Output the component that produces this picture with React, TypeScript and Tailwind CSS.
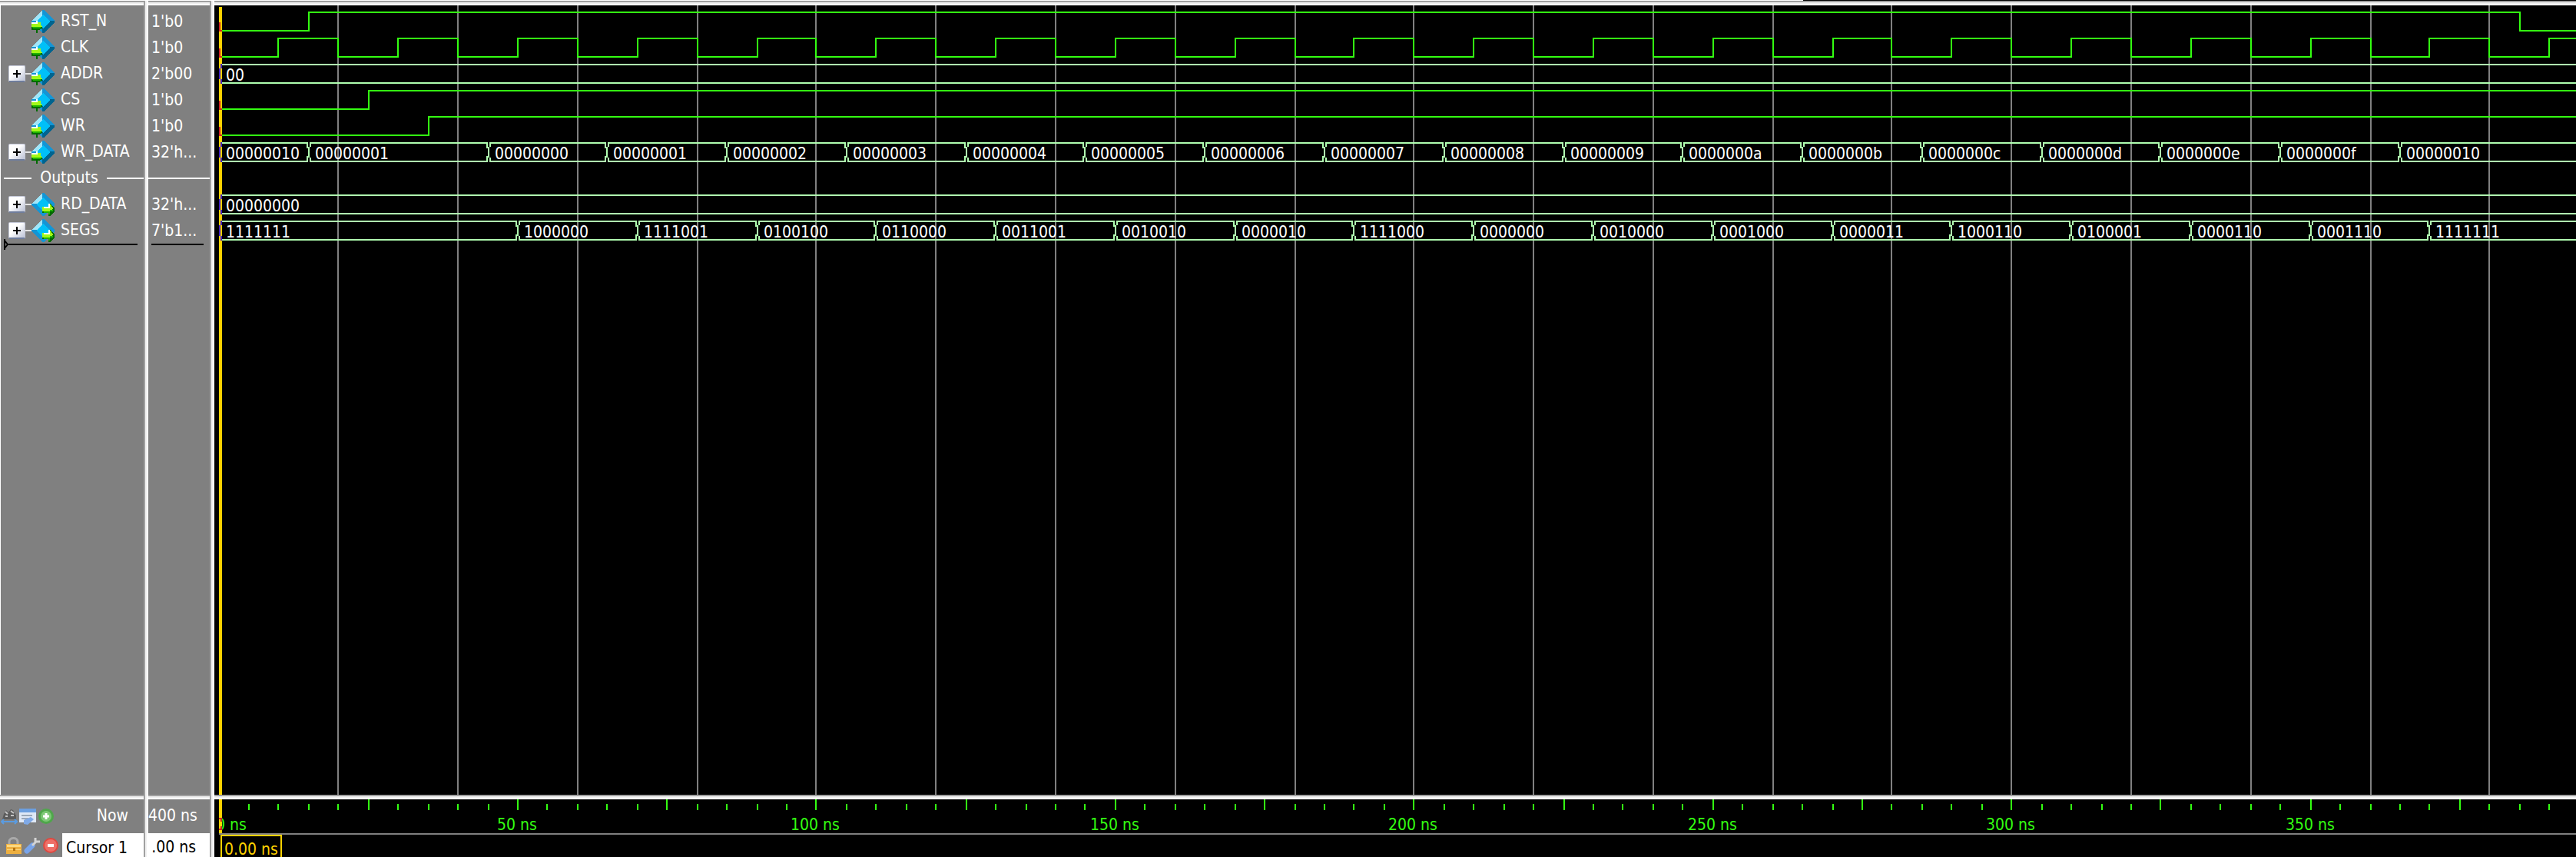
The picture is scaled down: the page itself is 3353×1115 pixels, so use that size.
import React from "react";

type Signal = { name: string; value: string; expandable?: boolean; output?: boolean };

const inputs: Signal[] = [
  { name: "RST_N", value: "1'b0" },
  { name: "CLK", value: "1'b0" },
  { name: "ADDR", value: "2'b00", expandable: true },
  { name: "CS", value: "1'b0" },
  { name: "WR", value: "1'b0" },
  { name: "WR_DATA", value: "32'h...", expandable: true },
];
const outputs: Signal[] = [
  { name: "RD_DATA", value: "32'h...", expandable: true, output: true },
  { name: "SEGS", value: "7'b1...", expandable: true, output: true },
];

const END = 520;
const GREEN = "#33ff11";
const MINT = "#b0ffb0";

// Horizontal position of a time in ns, snapped to the 2px drawing grid.
const px = (t: number) => 4 + 2 * Math.ceil(3.889 * t);

const range = (from: number, to: number, step: number) => {
  const out: number[] = [];
  for (let t = from; t <= to; t += step) out.push(t);
  return out;
};

const wrData: [number, string][] = [
  [0, "00000010"],
  [15, "00000001"],
  ...["0", "1", "2", "3", "4", "5", "6", "7", "8", "9", "a", "b", "c", "d", "e", "f"].map(
    (d, i): [number, string] => [45 + 20 * i, "0000000" + d]
  ),
  [365, "00000010"],
];

const segs: [number, string][] = [
  [0, "1111111"],
  ...[
    "1000000", "1111001", "0100100", "0110000", "0011001", "0010010", "0000010", "1111000", "0000000",
    "0010000", "0001000", "0000011", "1000110", "0100001", "0000110", "0001110", "1111111",
  ].map((v, i): [number, string] => [50 + 20 * i, v]),
];

function BitWave({ row, edges }: { row: number; edges: number[] }) {
  const hi = 9 + 34 * row;
  const lo = hi + 24;
  let level = lo;
  let d = `M10 ${lo}`;
  edges.forEach((t) => {
    level = level === lo ? hi : lo;
    d += `H${px(t) + 1}V${level}`;
  });
  d += `H${px(END)}`;
  return (
    <g fill="none" strokeWidth="2">
      <path d={d} stroke={GREEN} />
      <path d={`M7 ${hi + 13}V${lo}H10`} stroke="#cc2222" />
    </g>
  );
}

function BusWave({ row, items }: { row: number; items: [number, string][] }) {
  const hi = 9 + 34 * row;
  const lo = hi + 24;
  return (
    <g>
      <g fill="none" strokeWidth="2" stroke={MINT}>
        {items.map(([t], i) => {
          const next = items[i + 1];
          const left = t === 0 ? 10 : px(t) + 2;
          const right = next ? px(next[0]) : px(END);
          const x = px(t) + 1;
          return (
            <g key={t}>
              <path d={`M${left} ${hi}H${right}M${left} ${lo}H${right}`} />
              {t > 0 && (
                <path
                  d={`M${x + 2} ${hi}v5M${x + 2} ${lo}v-5M${x} ${hi + 5}V${lo - 5}M${x - 2} ${hi}v7M${x - 2} ${lo}v-7`}
                />
              )}
            </g>
          );
        })}
      </g>
      <path d={`M9 ${hi - 1}v6M7 ${hi + 5}v14M9 ${hi + 19}v6`} stroke="#4422bb" strokeWidth="2" fill="none" />
      {items.map(([t, v]) => (
        <text key={t} x={t === 0 ? 15 : px(t) + 9} y={hi + 21} fill="#fff">
          {v}
        </text>
      ))}
    </g>
  );
}

function Gem({ output }: { output?: boolean }) {
  return (
    <svg viewBox="0 0 15 15" className="size-[30px] shrink-0" shapeRendering="crispEdges" aria-hidden="true">
      <path d="M7 0h1l7 7v1l-7 7H7L0 8V7z" fill="#1495d5" />
      <path d="M7 0v4L4 7H0z" fill="#a0e6fa" />
      <path d="M15 7v1l-7 7H7v-3l4-5z" fill={output ? "#1495d5" : "#00648f"} />
      <path d="M7.500 3L12 7.500 7.500 12 3 7.500z" fill="#00c0f8" />
      {output ? (
        <>
          <path d="M7 9h4V7h1l3 3v2l-3 3h-1v-2H7z" fill="#006a00" />
          <path d="M7 9h4V7h1l2 3-2 2v1h-1v-1H7z" fill="#a2f818" />
          <path d="M8 9h3V7h1v3H8z" fill="#fff" />
          <path d="M8 12h4v-1h2v1h-2v2h-1v-1H8z" fill="#1fb400" />
        </>
      ) : (
        <>
          <path d="M0 9h4V8h1l2 3v1l-2 1H4v2H3v-2H0z" fill="#006a00" />
          <path d="M0 9h4V8h2v2l1 1H0z" fill="#a2f818" />
          <path d="M0 11h6v1H1z" fill="#1fb400" />
          <path d="M0 8h3V7h1v2H0z" fill="#fff" />
          <path d="M1 7h2v1H1z" fill="#1495d5" />
        </>
      )}
    </svg>
  );
}

function NameRow({ s }: { s: Signal }) {
  return (
    <li className="flex h-[34px] items-center pl-[10px]">
      <div className="flex w-[30px] items-center">
        {s.expandable && (
          <>
            <button
              aria-label={`Expand ${s.name}`}
              className="flex size-[22px] shrink-0 items-center justify-center rounded-[2px] border border-[#c4c8d8] border-b-2 border-b-[#6f7d9c] bg-linear-to-br from-white from-40% to-[#bcc2d6]"
            >
              <svg viewBox="0 0 10 10" className="size-[10px]" aria-hidden="true">
                <path d="M5 0v10M0 5h10" stroke="#000" strokeWidth="2" />
              </svg>
            </button>
            <span className="h-[2px] flex-1 bg-[#e4e4e4]" />
          </>
        )}
      </div>
      <Gem output={s.output} />
      <span className="pl-[8px]">{s.name}</span>
    </li>
  );
}

const Bevel = () => (
  <div className="h-[6px] shrink-0 border-t-2 border-[#a0a0a0] bg-linear-to-b from-[#f0f0f0] from-50% to-white to-50%" />
);
const Splitter = () => (
  <div className="w-[6px] shrink-0 border-l-2 border-[#a0a0a0] bg-linear-to-r from-[#f0f0f0] from-50% to-white to-50%" />
);

const Ticks = () => (
  <g stroke={GREEN} strokeWidth="2">
    {range(5, END, 5).map((t) => (
      <path key={t} d={`M${px(t) + 1} ${t % 25 === 0 ? 0 : 6}V14`} />
    ))}
  </g>
);

const iconButton = "flex size-[24px] shrink-0 items-center justify-center";

export default function App() {
  return (
    <div className="flex h-screen min-h-[400px] flex-col overflow-hidden bg-black font-['DejaVu_Sans_Condensed','DejaVu_Sans',sans-serif] text-[21px] whitespace-nowrap text-white">
      <div className="h-px w-[70%] shrink-0 bg-white" />
      <main className="flex min-h-0 flex-1">
        <section aria-label="Signals" className="flex w-[187px] shrink-0 flex-col bg-[#808080]">
          <Bevel />
          <ul className="flex-1 overflow-hidden border-l border-white pt-[4px]">
            {inputs.map((s) => (
              <NameRow key={s.name} s={s} />
            ))}
            <li className="flex h-[34px] items-center pl-[4px]">
              <span className="h-[2px] w-[36px] bg-white" />
              <span className="w-[98px] text-center">Outputs</span>
              <span className="h-[2px] flex-1 bg-white" />
            </li>
            {outputs.map((s) => (
              <NameRow key={s.name} s={s} />
            ))}
            <li className="-mt-[6px] flex h-[14px] items-center pr-[8px] pl-[4px]">
              <svg viewBox="0 0 6 14" className="h-[14px] w-[6px]" aria-hidden="true">
                <path d="M1 0v14M1 2l4 5-4 5" fill="none" stroke="#000" strokeWidth="2" />
              </svg>
              <span className="h-[2px] flex-1 bg-black" />
            </li>
          </ul>
          <Bevel />
          <div className="flex h-[44px] shrink-0 items-center pr-[20px]">
            <button aria-label="Find" className={iconButton}>
              <svg viewBox="0 0 22 22" className="size-[22px]">
                <path d="M2 15L4 8l3-5 3 3 3-4 3 1 4 7v5z" fill="#5c5c5c" />
                <path d="M6 5l3 3M13 4l4 3M6 11h3M13 10h4" stroke="#c4c4c4" strokeWidth="2" />
                <path d="M1 18h20M4 15l-3 3 3 3M18 15l3 3-3 3" fill="none" stroke="#5a9be0" strokeWidth="2" />
              </svg>
            </button>
            <button aria-label="Edit grid" className={iconButton}>
              <svg viewBox="0 0 24 24" className="size-[24px]">
                <path d="M1 2h22v18H1z" fill="#dfe8f6" />
                <path d="M1 2h22v5H1z" fill="#6c9fe0" />
                <path d="M4 11h14M4 15h9" stroke="#9aa7b8" strokeWidth="2" />
                <path d="M7 17l9-4 4 3-8 7-5-1z" fill="#7fa9e6" />
              </svg>
            </button>
            <button aria-label="Add cursor" className={iconButton}>
              <svg viewBox="0 0 22 22" className="size-[22px]">
                <circle cx="11" cy="11" r="10" fill="#4fa64b" />
                <circle cx="11" cy="11" r="7" fill="#7cc875" />
                <path d="M11 7v8M7 11h8" stroke="#fff" strokeWidth="3" />
              </svg>
            </button>
            <span className="flex-1 text-right">Now</span>
          </div>
          <div className="flex h-[31px] shrink-0 items-center">
            <div className="flex w-[81px] shrink-0 items-center pl-[6px]">
              <button aria-label="Lock cursor" className={iconButton}>
                <svg viewBox="0 0 22 24" className="size-[24px]">
                  <path d="M5 11V7c0-6 11-6 11 0v4" fill="none" stroke="#a9a9a9" strokeWidth="3" />
                  <path d="M1 10h20v13H1z" fill="#eeb040" />
                  <path d="M2 11h18v3H2zM2 17h18v1H2z" fill="#fbd880" />
                  <path d="M10 15h3v4h-3z" fill="#b57514" />
                </svg>
              </button>
              <button aria-label="Edit cursor" className={iconButton}>
                <svg viewBox="0 0 24 24" className="size-[24px]">
                  <path d="M5 19l7-7" stroke="#78a4ea" strokeWidth="7" strokeLinecap="round" />
                  <path d="M12 12l5-5M16 2v5h6" fill="none" stroke="#d4d4d4" strokeWidth="3" />
                </svg>
              </button>
              <button aria-label="Remove cursor" className={iconButton}>
                <svg viewBox="0 0 22 22" className="size-[22px]">
                  <circle cx="11" cy="11" r="10" fill="#e0483f" />
                  <circle cx="11" cy="11" r="8" fill="#ee7068" />
                  <path d="M7 11h8" stroke="#fff" strokeWidth="4" />
                </svg>
              </button>
            </div>
            <input
              aria-label="Cursor name"
              defaultValue="Cursor 1"
              className="h-full min-w-0 flex-1 bg-white pt-[6px] pl-[5px] text-black outline-none"
            />
          </div>
        </section>
        <Splitter />
        <section aria-label="Values" className="flex w-[80px] shrink-0 flex-col bg-[#808080]">
          <Bevel />
          <ul className="flex-1 overflow-hidden pt-[4px]">
            {inputs.map((s) => (
              <li key={s.name} className="h-[34px] pl-[4px] leading-[34px]">
                {s.value}
              </li>
            ))}
            <li className="flex h-[34px] items-center">
              <span className="h-[2px] flex-1 bg-white" />
            </li>
            {outputs.map((s) => (
              <li key={s.name} className="h-[34px] pl-[4px] leading-[34px]">
                {s.value}
              </li>
            ))}
            <li className="-mt-[6px] flex h-[14px] items-center pr-[8px] pl-[4px]">
              <span className="h-[2px] flex-1 bg-black" />
            </li>
          </ul>
          <Bevel />
          <div className="flex h-[44px] shrink-0 items-center">400 ns</div>
          <div className="flex h-[31px] shrink-0 items-center justify-end bg-white pt-[6px] pr-[18px] text-black">
            .00 ns
          </div>
        </section>
        <Splitter />
        <section aria-label="Waveforms" className="flex min-w-0 flex-1 flex-col bg-black">
          <Bevel />
          <div className="min-h-0 flex-1 overflow-hidden">
            <svg className="block h-full w-full" role="img" aria-label="Signal waveforms">
              <g fill="#808080">
                {range(20, END, 20).map((t) => (
                  <rect key={t} x={px(t)} y="0" width="2" height="100%" />
                ))}
              </g>
              <rect x="6" y="2" width="4" height="100%" fill="#ffd200" />
              <BitWave row={0} edges={[15, 385]} />
              <BitWave row={1} edges={range(10, 500, 10)} />
              <BusWave row={2} items={[[0, "00"]]} />
              <BitWave row={3} edges={[25]} />
              <BitWave row={4} edges={[35]} />
              <BusWave row={5} items={wrData} />
              <BusWave row={7} items={[[0, "00000000"]]} />
              <BusWave row={8} items={segs} />
            </svg>
          </div>
          <Bevel />
          <svg className="block h-[44px] w-full shrink-0" role="img" aria-label="Time scale">
            <Ticks />
            <g fill={GREEN}>
              <text x="2" y="40">0 ns</text>
              {range(50, 350, 50).map((t) => (
                <text key={t} x={px(t)} y="40" textAnchor="middle">
                  {t} ns
                </text>
              ))}
            </g>
            <rect x="0" y="0" width="6" height="44" fill="#000" />
            <rect x="6" y="0" width="4" height="44" fill="#ffd200" />
            <path d="M6 25h3v4M6 39h3v-4" fill="none" stroke="#cc2222" strokeWidth="2" />
          </svg>
          <div className="flex h-[31px] shrink-0 pl-[6px]">
            <div className="flex flex-1 border-t-2 border-[#808080] pl-[2px]">
              <div className="h-[29px] border-2 border-b-0 border-[#ffd200] px-[3px] leading-[34px] text-[#ffd200]">
                0.00 ns
              </div>
            </div>
          </div>
        </section>
      </main>
    </div>
  );
}
